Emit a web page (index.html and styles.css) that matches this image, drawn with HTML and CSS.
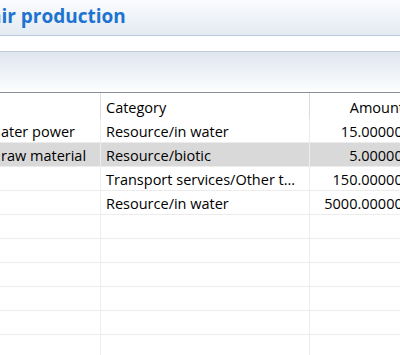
FILE: index.html
```html
<!DOCTYPE html>
<html lang="en">
<head>
    <meta charset="UTF-8">
    <title>Air production</title>
    <link rel="stylesheet" href="styles.css">
</head>

<body>
    <!--title-->
    <header class="head">
        <h1 class="tit">air production</h1>
    </header>

    <!--toolbar strip-->
    <div class="strip"></div>

    <!--section header-->
    <div class="sect"></div>

    <!--table-->
    <div class="tbl">
        <div class="row thead">
            <div class="cell c1"></div>
            <div class="cell c2">Category</div>
            <div class="cell c3">Amount</div>
        </div>
        <div class="row">
            <div class="cell c1">ater power</div>
            <div class="cell c2">Resource/in water</div>
            <div class="cell c3">15.000000</div>
        </div>
        <div class="row sel">
            <div class="cell c1">raw material</div>
            <div class="cell c2">Resource/biotic</div>
            <div class="cell c3">5.000000</div>
        </div>
        <div class="row">
            <div class="cell c1"></div>
            <div class="cell c2">Transport services/Other transport</div>
            <div class="cell c3">150.000000</div>
        </div>
        <div class="row">
            <div class="cell c1"></div>
            <div class="cell c2">Resource/in water</div>
            <div class="cell c3">5000.000000</div>
        </div>
        <div class="row"><div class="cell c1"></div><div class="cell c2"></div><div class="cell c3"></div></div>
        <div class="row"><div class="cell c1"></div><div class="cell c2"></div><div class="cell c3"></div></div>
        <div class="row"><div class="cell c1"></div><div class="cell c2"></div><div class="cell c3"></div></div>
        <div class="row"><div class="cell c1"></div><div class="cell c2"></div><div class="cell c3"></div></div>
        <div class="row"><div class="cell c1"></div><div class="cell c2"></div><div class="cell c3"></div></div>
        <div class="row"><div class="cell c1"></div><div class="cell c2"></div><div class="cell c3"></div></div>
    </div>
</body>
</html>
```

FILE: styles.css
```css
html,
body,
h1 {
    margin: 0;
    padding: 0;
}

body {
    width: 400px;
    height: 355px;
    overflow: hidden;
    background: #fff;
    font-family: "Open Sans", "Noto Sans", sans-serif;
    color: #000;
}

/*title*/
.head {
    height: 35px;
    border-bottom: 1px solid #b8c9d9;
    background: linear-gradient(#fbfcfe, #e3eaf2);
    overflow: hidden;
}

.tit {
    margin-left: -10px;
    padding-top: 3px;
    font-size: 19px;
    font-weight: bold;
    line-height: 26px;
    color: #1d73cf;
    white-space: nowrap;
}

/*strip under title*/
.strip {
    height: 15px;
    border-bottom: 1px solid #bfcdd9;
}

/*section header*/
.sect {
    height: 40px;
    border-bottom: 1px solid #8a8e99;
    background: linear-gradient(#dfe6ef, #fdfeff);
}

/*table*/
.tbl {
    width: 420px;
}

.row {
    display: grid;
    grid-template-columns: 100px 210px 110px;
    height: 23px;
    border-bottom: 1px solid #ececec;
    font-size: 14.5px;
    line-height: 25px;
}

.thead {
    height: 26px;
    line-height: 29px;
    border-bottom: 0;
}

.sel {
    background: #d9d9d9;
}

.cell {
    white-space: nowrap;
    overflow: hidden;
    text-overflow: ellipsis;
    border-right: 1px solid #e9eef4;
}

.thead .cell {
    border-right-color: #dcdcdc;
}

.c1 {
    padding-left: 1px;
    width: 99px;
}

.c2 {
    padding-left: 6px;
    padding-right: 10px;
}

.c3 {
    text-align: right;
    padding-right: 9px;
    border-right: 0;
}

.thead .c3 {
    padding-right: 16px;
}
```
